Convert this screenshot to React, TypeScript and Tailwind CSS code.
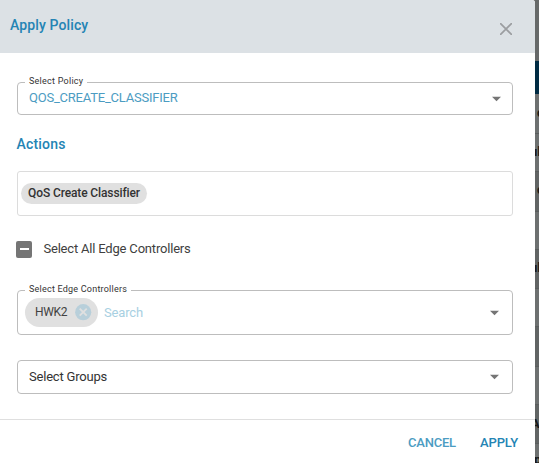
import type { ReactNode } from "react";

function Caret({ className = "" }: { className?: string }) {
  return (
    <svg className={`h-[6px] w-[9px] shrink-0 ${className}`} viewBox="0 0 9 6" fill="#757575">
      <path d="M0 0.8h9L4.5 5.3z" />
    </svg>
  );
}

function Field({ label, className = "", children }: { label?: ReactNode; className?: string; children: ReactNode }) {
  return (
    <div className={`relative flex w-[496px] items-center rounded-[4px] border border-[#bdbdbd] ${className}`}>
      {label && (
        <span className="absolute -top-[7px] left-[7px] bg-white px-[4px] text-[9px] leading-[11px] whitespace-nowrap text-[#333]">
          {label}
        </span>
      )}
      {children}
    </div>
  );
}

const backdropRows = [
  { text: "c", className: "h-[40px] bg-[#6d7070] indent-[2px] leading-[37px]" },
  { text: "ul", className: "h-[38px] bg-[#6d7070] -indent-[5px] leading-[35px]" },
  { text: "c", className: "h-[40px] bg-[#616464] indent-[2px] leading-[35px]" },
  { text: "", className: "h-[38px] bg-[#6d7070]" },
  { text: "ul", className: "h-[39px] bg-[#616464] -indent-[5px] leading-[36px]" },
  { text: "", className: "h-[38px] bg-[#6d7070]" },
  { text: "", className: "h-[40px] bg-[#616464]" },
  { text: "", className: "h-[38px] bg-[#6d7070]" },
  { text: "A", className: "h-[39px] bg-[#616464] -indent-[4px] leading-[37px]" },
  { text: "p", className: "h-[38px] bg-[#6d7070] -indent-[1px] leading-[32px]" },
];

export default function App() {
  return (
    <div className="flex h-[463px] w-[539px] overflow-hidden bg-[#666969] font-['Roboto',sans-serif]">
      <main className="flex w-[535px] shrink-0 flex-col overflow-hidden rounded-tr-[3px] bg-white">
        <header className="flex h-[53px] shrink-0 items-start justify-between bg-[#dce1e5] pr-[23px] pl-[10px]">
          <h1 className="pt-[15px] text-[14px] leading-[20px] font-medium tracking-[0.12px] text-[#2484b4]">Apply Policy</h1>
          <svg className="mt-[23px] size-[12px]" viewBox="0 0 12 12" fill="none" stroke="#9b9da0" strokeWidth="1.7">
            <path d="M0.1 0.1l11.8 11.8M11.9 0.1L0.1 11.9" />
          </svg>
        </header>

        <section className="flex h-[366px] shrink-0 flex-col pt-[29px] pl-[17px]">
          <Field label={<span className="tracking-[0.25px]">Select Policy</span>} className="h-[33px] justify-between pr-[11px] pl-[11px]">
            <span className="-mt-[2px] text-[13px] leading-[18px] tracking-[-0.22px] text-[#4c9cc2]">QOS_CREATE_CLASSIFIER</span>
            <Caret className="mt-px" />
          </Field>

          <h2 className="mt-[19px] -ml-[0.5px] text-[14px] leading-[20px] font-medium tracking-[0.2px] text-[#2484b4]">Actions</h2>

          <div className="mt-[17px] flex h-[45px] w-[496px] shrink-0 items-center rounded-[3px] border border-[#dcdcdc] pl-[3px]">
            <span className="flex h-[21px] w-[126px] items-center justify-center rounded-full bg-[#e0e0e0] pb-px text-[12px] font-medium tracking-[-0.12px] whitespace-nowrap text-[#333]">
              QoS Create Classifier
            </span>
          </div>

          <label className="mt-[24px] -ml-[0.6px] flex h-[18px] items-center gap-[11px] text-[13px] tracking-[-0.19px] text-[#404040]">
            <span className="flex h-[17px] w-[16px] items-center justify-center rounded-[2px] bg-[#757575]">
              <span className="h-[2px] w-[9px] bg-white" />
            </span>
            <span>Select All Edge Controllers</span>
          </label>

          <Field label={<span className="tracking-[0.22px]">Select Edge Controllers</span>} className="mt-[32px] h-[45px] shrink-0 pr-[13px] pl-[7px]">
            <span className="flex h-[29px] w-[73px] items-center justify-between rounded-full bg-[#e0e0e0] pr-[6px] pl-[10px] text-[12px] tracking-[-0.3px] text-[#424242]">
              <span className="mb-[2px]">HWK2</span>
              <svg className="size-[17px]" viewBox="0 0 17 17" fill="none">
                <circle cx="8.2" cy="8.2" r="8.1" fill="#b8cfda" />
                <path d="M4.7 4.7l7 7M11.7 4.7l-7 7" stroke="#e0e0e0" strokeWidth="1.8" />
              </svg>
            </span>
            <span className="ml-[6px] text-[13px] tracking-[-0.15px] text-[#a8d0e2]">Search</span>
            <Caret className="ml-auto" />
          </Field>

          <Field className="mt-[25px] h-[34px] shrink-0 justify-between pr-[13px] pl-[11px]">
            <span className="text-[13px] tracking-[-0.2px] text-[#333]">Select Groups</span>
            <Caret />
          </Field>
        </section>

        <footer className="flex h-[44px] shrink-0 items-center justify-end gap-[24px] border-t border-[#dfdfdf] pt-[2px] pr-[17px] text-[13px] font-medium">
          <button className="tracking-[-0.2px] text-[#4c9cc2]">CANCEL</button>
          <button className="tracking-[-0.1px] text-[#2484b4]">APPLY</button>
        </footer>
      </main>

      <aside className="w-[4px] shrink-0 overflow-hidden text-[13px] font-bold text-[#181818]">
        <div className="h-[61px] bg-[#666969]" />
        <div className="h-[33px] bg-[#002b43]" />
        {backdropRows.map((row, i) => (
          <div key={i} className={`overflow-hidden border-b border-[#5a5d5d] whitespace-nowrap ${row.className}`}>
            {row.text}
          </div>
        ))}
      </aside>
    </div>
  );
}
